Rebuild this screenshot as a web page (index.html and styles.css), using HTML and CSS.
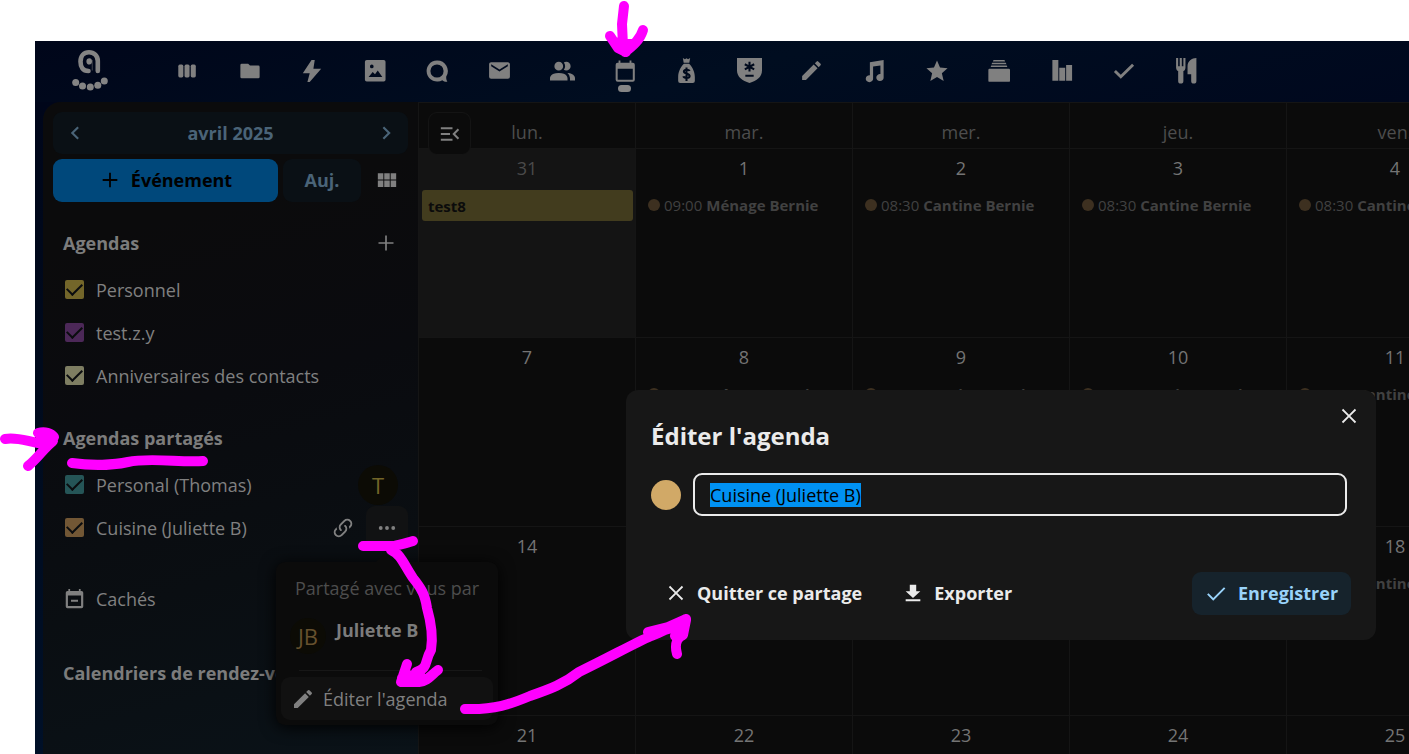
FILE: index.html
```html
<!DOCTYPE html>
<html lang="fr">
<head>
<meta charset="utf-8">
<title>Agenda</title>
<link rel="stylesheet" href="styles.css">
</head>
<body>
<div class="app">
  <header class="topbar">
    <a class="logo" href="#" aria-label="Accueil">
      <svg viewBox="0 0 36 44"><path d="M16.500 22C10.500 22 8.500 17.500 8.500 12.500 8.500 7 12 3.200 17 3.200S25.800 7 25.800 12V22" fill="none" stroke="currentColor" stroke-width="4.600" stroke-linecap="round" stroke-linejoin="round"/><path d="M17.500 9.300a3 3 0 1 0 0 6.200c1.500 0 2.500-1 2.500-3s-1-3.200-2.500-3.200z" fill="currentColor"/><path d="M20.300 11v10.500" stroke="currentColor" stroke-width="1.200" opacity=".4"/><g fill="currentColor"><circle cx="3.700" cy="33.500" r="3.500"/><circle cx="10.500" cy="37" r="3.500"/><circle cx="18.300" cy="38" r="3.500"/><circle cx="25.800" cy="36.300" r="3.500"/><circle cx="32.300" cy="32" r="3.500"/></g></svg>
    </a>
    <nav class="apps" aria-label="Applications">
      <a href="#" aria-label="Tableau de bord"><svg viewBox="0 0 24 24"><rect x="2.500" y="5" width="5.500" height="14" rx="1.700"/><rect x="9.300" y="5" width="5.500" height="14" rx="1.700"/><rect x="16.100" y="5" width="5.500" height="14" rx="1.700"/></svg></a>
      <a href="#" aria-label="Fichiers"><svg viewBox="0 0 24 24"><path d="M10 4H3A1.500 1.500 0 0 0 1.500 5.500v13A1.500 1.500 0 0 0 3 20h18a1.500 1.500 0 0 0 1.500-1.500v-11A1.500 1.500 0 0 0 21 6h-9z"/></svg></a>
      <a href="#" aria-label="Activité"><svg viewBox="0 0 24 24"><path d="M11.500 0H15l-1.500 9.500H22L9.500 24H7l2.500-9.500H2z"/></svg></a>
      <a href="#" aria-label="Photos"><svg viewBox="0 0 24 24"><path fill-rule="evenodd" d="M3 0h18.500a2 2 0 0 1 2 2v19.500a2 2 0 0 1-2 2H3a2 2 0 0 1-2-2V2a2 2 0 0 1 2-2zm2 18.500h15l-5-7-3 4-2.500-2.500zM8.500 5a2 2 0 1 0 0 4 2 2 0 0 0 0-4z"/></svg></a>
      <a href="#" aria-label="Discussion"><svg viewBox="0 0 24 24"><path fill-rule="evenodd" d="M12 .5a11.500 11.500 0 1 0 5.800 21.500c2 1.500 4 2 5.500 1.500-1-1.500-1.500-3.500-1.200-5.500A11.500 11.500 0 0 0 12 .5zm0 4.300a7.200 7.200 0 1 1 0 14.400 7.200 7.200 0 0 1 0-14.400z"/></svg></a>
      <a href="#" aria-label="Mail"><svg class="wide" viewBox="0 0 24 24"><path d="M20 8l-8 5-8-5V6l8 5 8-5m0-2H4c-1.100 0-2 .9-2 2v12a2 2 0 0 0 2 2h16a2 2 0 0 0 2-2V6c0-1.100-.9-2-2-2z"/></svg></a>
      <a href="#" aria-label="Contacts"><svg class="wide" viewBox="2 2 20 18"><path d="M16 17v2H2v-2s0-4 7-4 7 4 7 4M12.500 7.500A3.500 3.500 0 1 0 9 11a3.500 3.500 0 0 0 3.500-3.500M15.940 13A5.320 5.320 0 0 1 18 17v2h4v-2s0-3.630-6.060-4M15 4a3.390 3.390 0 0 0-1.930.59 5 5 0 0 1 0 5.820A3.390 3.390 0 0 0 15 11a3.500 3.500 0 0 0 0-7z"/></svg></a>
      <a class="current" href="#" aria-label="Agenda" aria-current="page"><svg viewBox="0 0 24 24"><path d="M20.500 21.500H4V9.500h16.500M17 .5V3H7V.5H5V3H4a2.200 2.200 0 0 0-2.200 2.200V21.500A2.200 2.200 0 0 0 4 23.700h16.500a2.200 2.200 0 0 0 2.200-2.200V5.200A2.200 2.200 0 0 0 20.500 3H19V.5"/></svg></a>
      <a href="#" aria-label="Budget"><svg class="wide" viewBox="0 0 24 24"><path d="M8.500 0l2 1.200L12 .2l1.500 1 2-1.200-.8 4.500H9.300zM9.500 5.500h5C17 7.500 20 13 20 18v4a2 2 0 0 1-2 2H6a2 2 0 0 1-2-2v-4c0-5 3-10.500 5.500-12.500z"/><path class="cut" d="M15 12.500c-.5-1.400-5.500-2-5.500.5 0 2.500 5.500 1.500 5.500 4.200 0 2.500-5.500 2.300-6 .3M12 9v13"/></svg></a>
      <a href="#" aria-label="Mots de passe"><svg class="wide" viewBox="0 0 24 24"><path d="M0 0h24v12c0 6-5 10-12 12C5 22 0 18 0 12z"/><path class="cut" d="M12 3.500v9.500M7.500 6l9 5M16.500 6l-9 5M8 17h8"/></svg></a>
      <a href="#" aria-label="Notes"><svg class="wide" viewBox="0 0 24 24"><path d="M20.700 7a1 1 0 0 0 0-1.400l-2.300-2.300a1 1 0 0 0-1.400 0l-1.800 1.800 3.700 3.700M3 17.200V21h3.700L17.800 9.900l-3.700-3.700z"/></svg></a>
      <a href="#" aria-label="Musique"><svg viewBox="0 0 24 24"><path d="M7.500 2.500L22.500 0v19a4 3.800 0 1 1-3.500-3.600V6L11 7.200v13a4 3.800 0 1 1-3.500-3.600z"/></svg></a>
      <a href="#" aria-label="Favoris"><svg viewBox="0 0 24 24"><path d="M12 .5l3.300 7.700 8.200.8-6.200 5.500 2 8.500-7.300-4.500L4.700 23l2-8.500L.5 9l8.200-.8z"/></svg></a>
      <a href="#" aria-label="Deck"><svg viewBox="0 0 24 24"><path d="M6 0h12l.6 1.500H5.400zM4.500 3h15l.6 1.500H3.900zM3.500 6h17l.6 1.500H2.900zM1.700 9.500h21a1.300 1.300 0 0 1 1.300 1.300v11.700a1.300 1.300 0 0 1-1.300 1.300h-21a1.300 1.300 0 0 1-1.300-1.300V10.800a1.300 1.300 0 0 1 1.300-1.300z"/></svg></a>
      <a href="#" aria-label="Sondages"><svg viewBox="0 0 24 24"><path d="M1.500 0h6.500v22.500H1.500zM9 8.500h6.500v14H9zM16.500 5.500H23v17h-6.500z"/></svg></a>
      <a href="#" aria-label="Tâches"><svg viewBox="0 0 24 24"><path d="M8.500 20.500L1 13l2.200-2.200 5.300 5.300L20.800 4 23 6.200z"/></svg></a>
      <a href="#" aria-label="Recettes"><svg class="wide" viewBox="0 0 24 24"><path d="M2 0h2v8h1.500V0h2v8H9V0h2v9c0 2-1 3-2 3.500V22a2 2 0 0 1-5 0v-9.500C3 12 2 11 2 9zM21.500 0v22a2.500 2.500 0 0 1-5 0v-6.500H13V8c0-5 4-8 8.500-8z"/></svg></a>
    </nav>
  </header>

  <div class="content">
    <aside class="sidebar">
      <div class="month">
        <button class="plain" aria-label="Mois précédent"><svg viewBox="0 0 24 24"><path d="M15.900 17.100L10.800 12l5.100-5.100L14.400 5.400 7.800 12l6.600 6.600z"/></svg></button>
        <button class="plain month-name">avril 2025</button>
        <button class="plain" aria-label="Mois suivant"><svg viewBox="0 0 24 24"><path d="M8.600 17.100l5.100-5.100-5.100-5.100 1.500-1.500 6.600 6.600-6.600 6.600z"/></svg></button>
      </div>
      <div class="actions">
        <button class="btn new-event"><svg viewBox="0 0 24 24"><path d="M20 13h-7v7h-2v-7H4v-2h7V4h2v7h7z"/></svg>Événement</button>
        <button class="btn today">Auj.</button>
        <button class="btn view" aria-label="Vue"><svg viewBox="0 0 24 24"><path d="M2 4.500h6v7H2zM9 4.500h6v7H9zM16 4.500h6v7h-6zM2 12.500h6v7H2zM9 12.500h6v7H9zM16 12.500h6v7h-6z"/></svg></button>
      </div>

      <div class="section-head"><h2>Agendas</h2><button class="plain add" aria-label="Ajouter un agenda"><svg viewBox="0 0 24 24"><path d="M21 13h-8v8h-2v-8H3v-2h8V3h2v8h8z"/></svg></button></div>
      <ul class="list">
        <li><label><input type="checkbox" class="c-yellow" checked>Personnel</label></li>
        <li><label><input type="checkbox" class="c-purple" checked>test.z.y</label></li>
        <li><label><input type="checkbox" class="c-cream" checked>Anniversaires des contacts</label></li>
      </ul>

      <div class="section-head"><h2>Agendas partagés</h2></div>
      <ul class="list">
        <li><label><input type="checkbox" class="c-teal" checked>Personal (Thomas)</label><span class="avatar">T</span></li>
        <li class="with-menu"><label><input type="checkbox" class="c-tan" checked>Cuisine (Juliette B)</label>
          <button class="plain link" aria-label="Copier le lien"><svg viewBox="0 0 24 24"><path d="M10.600 13.400c.4.400.4 1 0 1.400-.4.400-1 .4-1.400 0a5 5 0 0 1 0-7.100l3.500-3.500a5 5 0 0 1 7.100 7.100l-1.500 1.500c0-.8-.1-1.700-.4-2.400l.5-.5a3 3 0 0 0 0-4.300 3 3 0 0 0-4.300 0l-3.500 3.500a3 3 0 0 0 0 4.300m2.800-4.200c.4-.4 1-.4 1.400 0a5 5 0 0 1 0 7.100l-3.500 3.500a5 5 0 0 1-7.100-7.100l1.500-1.500c0 .8.100 1.700.4 2.400l-.5.500a3 3 0 0 0 0 4.300 3 3 0 0 0 4.300 0l3.500-3.500a3 3 0 0 0 0-4.300c-.4-.4-.4-1 0-1.400z"/></svg></button>
          <button class="plain more" aria-label="Actions"><svg viewBox="0 0 24 24"><circle cx="4.500" cy="12" r="2.300"/><circle cx="12" cy="12" r="2.300"/><circle cx="19.500" cy="12" r="2.300"/></svg></button>
          <div class="menu">
            <p class="menu-caption">Partagé avec vous par</p>
            <div class="owner"><span class="avatar small">JB</span><strong>Juliette B</strong></div>
            <hr>
            <button class="plain menu-item"><svg viewBox="0 0 24 24"><path d="M20.700 7a1 1 0 0 0 0-1.400l-2.300-2.300a1 1 0 0 0-1.400 0l-1.800 1.800 3.700 3.700M3 17.200V21h3.700L17.800 9.900l-3.700-3.700z"/></svg>Éditer l'agenda</button>
          </div>
        </li>
      </ul>
      <a class="hidden-cals" href="#"><svg viewBox="0 0 24 24"><path d="M19.500 20.500h-15V8.500h15M17 1v2.500H7V1H5v2.500H4A2 2 0 0 0 2 5.500v15.500a2 2 0 0 0 2 2h16a2 2 0 0 0 2-2V5.500a2 2 0 0 0-2-2h-1V1zM8 13.500h8v2.200H8z"/></svg>Cachés</a>
      <div class="section-head last"><h2>Calendriers de rendez-vous</h2></div>
    </aside>

    <main class="calendar">
      <button class="plain toggle" aria-label="Fermer la navigation"><svg viewBox="0 0 24 24"><path d="M1 4h14v2.400H1zM1 10.800h11v2.400H1zM1 17.600h14V20H1zM23 7.200L18.200 12l4.800 4.800-1.700 1.700-6.500-6.500 6.500-6.500z"/></svg></button>
      <table>
        <thead><tr><th>lun.</th><th>mar.</th><th>mer.</th><th>jeu.</th><th>ven.</th></tr></thead>
        <tbody>
          <tr>
            <td class="other"><div class="day">31</div><div class="block">test8</div></td>
            <td><div class="day">1</div><div class="event"><i></i>09:00 <b>Ménage Bernie</b></div></td>
            <td><div class="day">2</div><div class="event"><i></i>08:30 <b>Cantine Bernie</b></div></td>
            <td><div class="day">3</div><div class="event"><i></i>08:30 <b>Cantine Bernie</b></div></td>
            <td><div class="day">4</div><div class="event"><i></i>08:30 <b>Cantine Bernie</b></div></td>
          </tr>
          <tr>
            <td><div class="day">7</div></td>
            <td><div class="day">8</div><div class="event"><i></i>09:00 <b>Ménage Bernie</b></div></td>
            <td><div class="day">9</div><div class="event"><i></i>08:30 <b>Cantine Bernie</b></div></td>
            <td><div class="day">10</div><div class="event"><i></i>08:30 <b>Cantine Bernie</b></div></td>
            <td><div class="day">11</div><div class="event"><i></i>08:30 <b>Cantine Bernie</b></div></td>
          </tr>
          <tr>
            <td><div class="day">14</div></td>
            <td><div class="day">15</div></td>
            <td><div class="day">16</div></td>
            <td><div class="day">17</div></td>
            <td><div class="day">18</div><div class="event"><i></i>08:30 <b>Cantine Bernie</b></div></td>
          </tr>
          <tr>
            <td><div class="day">21</div></td>
            <td><div class="day">22</div></td>
            <td><div class="day">23</div></td>
            <td><div class="day">24</div></td>
            <td><div class="day">25</div></td>
          </tr>
        </tbody>
      </table>
    </main>
  </div>
</div>

<div class="dialog" role="dialog" aria-labelledby="dialog-title">
  <div class="dialog-head"><h1 id="dialog-title">Éditer l'agenda</h1><button class="plain close" aria-label="Fermer"><svg viewBox="0 0 24 24"><path d="M19.800 5.600l-1.400-1.400L12 10.600 5.600 4.200 4.200 5.600l6.400 6.400-6.400 6.400 1.400 1.400 6.400-6.400 6.400 6.400 1.400-1.400-6.400-6.400z"/></svg></button></div>
  <div class="field"><button class="swatch" aria-label="Couleur"></button><input id="name" type="text" aria-label="Nom de l'agenda" value="Cuisine (Juliette B)"></div>
  <div class="dialog-actions">
    <button class="plain leave"><svg viewBox="0 0 24 24"><path d="M19.800 5.600l-1.400-1.400L12 10.600 5.600 4.200 4.200 5.600l6.400 6.400-6.400 6.400 1.400 1.400 6.400-6.400 6.400 6.400 1.400-1.400-6.400-6.400z"/></svg>Quitter ce partage</button>
    <button class="plain export"><svg viewBox="0 0 24 24"><path d="M4 21h16v-2.200H4M20 10h-4.500V3h-7v7H4l8 7.500z"/></svg>Exporter</button>
    <button class="btn save"><svg viewBox="0 0 24 24"><path d="M9 20.400l-6.700-6.700 1.500-1.500L9 17.400 20.700 5.700l1.500 1.500z"/></svg>Enregistrer</button>
  </div>
</div>

<svg class="ink" viewBox="0 0 1409 754" aria-hidden="true">
  <path d="M624 6L622 24L623 46M610 36L618 48L626 52M643 30C640 40 633 46 625 52M614 42L625 44L632 44"/>
  <path d="M5 439C17 437 26 441 38 443M38 433C45 431 51 433 54 437M53 441C44 448 38 458 28 466M41 442L50 438"/>
  <path d="M72 463C92 466 114 465 128 462C150 457 182 463 203 461"/>
  <path d="M363 546H394C402 544 407 543 413 541M391 550C401 554 404 565 413 578C421 588 425 594 427 608C431 622 433 638 431 650C424 662 429 668 416 672M407 664L401 682H419C428 681 431 675 438 670M402 678L420 673"/>
  <path d="M465 709C495 710 511 704 530 696C550 689 564 684 579 672C610 657 633 644 651 636C664 631 675 625 686 619M648 632L668 627L686 619M686 620L683 635C678 637 674 643 677 654M658 632L682 625L675 636"/>
</svg>
<script src="app.js"></script>
</body>
</html>
```

FILE: styles.css
```css
* { box-sizing: border-box; }
body {
  margin: 0;
  min-height: 100vh;
  position: relative;
  overflow: hidden;
  background: #fff;
  color: #808080;
  font: 18px/24px "Open Sans", "Noto Sans", sans-serif;
}
button, input { font: inherit; color: inherit; }
svg { display: block; width: 24px; height: 24px; fill: currentColor; flex: none; }
h1, h2, p, ul { margin: 0; padding: 0; }
ul { list-style: none; }
a { color: inherit; text-decoration: none; }
.plain { padding: 0; border: 0; background: none; }

.app {
  height: 100vh;
  padding: 41px 0 0 35px;
  display: flex;
  flex-direction: column;
}
.topbar {
  flex: none;
  height: 61px;
  padding-bottom: 2px;
  display: flex;
  align-items: center;
  background: linear-gradient(165deg, #00061a, #000d20 50%, #00081e);
}
.logo { flex: none; width: 121px; padding-left: 37px; color: #848484; }
.logo svg { width: 36px; height: 44px; overflow: visible; }
.apps {
  flex: 0 1 1062px;
  display: grid;
  grid-template-columns: repeat(17, 1fr);
}
.apps a { position: relative; display: grid; place-items: center; height: 60px; }
.apps svg { width: 22px; height: 22px; overflow: visible; }
.apps .wide { width: 25px; height: 25px; }
.cut { fill: none; stroke: #000a1c; stroke-width: 2; }
.current::after {
  content: "";
  position: absolute;
  bottom: 9px;
  width: 13px;
  height: 7px;
  border-radius: 4px;
  background: #858585;
}

.content {
  flex: 1;
  min-height: 0;
  display: flex;
  padding-left: 8px;
  background: linear-gradient(#00061a, #000a1c 40%, #001028);
}
.sidebar {
  flex: none;
  width: 375px;
  padding: 10px 10px 0;
  border-radius: 18px 0 0 0;
  background: linear-gradient(165deg, #0b0b0c 20%, #0a0b0f 45%, #0a0e12 70%, #0a1218);
}
.month {
  height: 42px;
  padding: 0 10px;
  display: flex;
  align-items: center;
  border-radius: 9px;
  background: #0a1015;
  color: #4a6478;
}
.month-name { flex: 1; font-weight: 700; }
.actions { display: flex; gap: 5px; margin-top: 5px; }
.btn {
  height: 43px;
  padding: 0 0 2px;
  border: 0;
  border-radius: 9px;
  display: flex;
  align-items: center;
  justify-content: center;
  font-weight: 700;
}
.new-event { flex: 1; gap: 10px; background: #00487b; color: #000; }
.new-event svg { width: 22px; height: 22px; }
.today { width: 78px; background: #0a1015; color: #4a6478; }
.view { width: 42px; background: none; color: #808080; }
.view svg { width: 22px; height: 22px; }

.section-head {
  height: 44px;
  margin: 19px 12px 3px 10px;
  display: flex;
  align-items: center;
  justify-content: space-between;
}
h2 { font-size: 18px; line-height: 24px; font-weight: 700; white-space: nowrap; color: #7c7c7c; }
.add { width: 20px; }
.add svg { width: 20px; height: 20px; }
.list li { height: 43px; display: flex; align-items: center; }
.list label { flex: 1; display: flex; align-items: center; gap: 12px; padding-left: 12px; white-space: nowrap; }
.list input {
  appearance: none;
  margin: 0;
  width: 19px;
  height: 19px;
  border-radius: 2px;
  display: grid;
  place-items: center;
}
.list input:checked::after {
  content: "";
  width: 13px;
  height: 7px;
  margin-bottom: 4px;
  border: solid #0b0d0f;
  border-width: 0 0 2px 2px;
  transform: rotate(-45deg);
}
.c-yellow { background: #73662a; }
.c-purple { background: #4c2858; }
.c-cream { background: #7e7e62; }
.c-teal { background: #255557; }
.c-tan { background: #725735; }
.avatar {
  width: 40px;
  height: 40px;
  margin-right: 10px;
  display: grid;
  place-items: center;
  border-radius: 50%;
  background: #0c0b05;
  color: #736528;
  font-size: 22px;
}
.with-menu { position: relative; }
.link { width: 24px; margin-right: 11px; }
.more {
  width: 42px;
  height: 43px;
  display: grid;
  place-items: center;
  border-radius: 9px;
  background: #111213;
}
.more svg { width: 20px; height: 20px; }
.menu {
  position: absolute;
  z-index: 2;
  top: 56px;
  left: 223px;
  width: 222px;
  padding: 5px;
  border-radius: 9px;
  background: #0b0b0b;
  box-shadow: 0 2px 16px #000;
}
.menu::before {
  content: "";
  position: absolute;
  bottom: 100%;
  left: 100px;
  border: 9px solid transparent;
  border-top: 0;
  border-bottom-color: #0b0b0b;
}
.menu-caption { height: 44px; padding: 9px 14px; color: #4d4d4d; white-space: nowrap; }
.owner { display: flex; height: 56px; padding-left: 9px; gap: 10px; color: #7c7c7c; }
.owner strong { margin-top: 7px; }
.avatar.small { width: 36px; height: 36px; margin: 7px 0 0; color: #66512e; }
.menu hr { margin: 3px 11px 6px 18px; border: 0; border-top: 1px solid #171717; }
.menu-item {
  width: 100%;
  height: 43px;
  padding: 0 10px;
  display: flex;
  align-items: center;
  gap: 8px;
  border-radius: 9px;
  background: #111;
  white-space: nowrap;
}
.hidden-cals { margin: 28px 0 0 11px; height: 43px; display: flex; align-items: center; gap: 11px; }
.hidden-cals svg { width: 21px; height: 21px; }
.last { margin-top: 31px; }

.calendar { flex: 1; min-width: 0; overflow: hidden; position: relative; background: #0b0b0b; }
.toggle {
  position: absolute;
  z-index: 1;
  left: 10px;
  top: 10px;
  width: 43px;
  height: 43px;
  display: grid;
  place-items: center;
  border: 1px solid #141414;
  border-radius: 9px;
  background: #0b0b0b;
}
.toggle svg { width: 20px; height: 20px; }
table { table-layout: fixed; width: 100%; min-width: 1086px; border-collapse: collapse; }
th, td { border: 1px solid #151515; padding: 0; font-weight: 400; }
th { height: 46px; padding-top: 12px; color: #4d4d4d; }
td { height: 189px; vertical-align: top; }
.day { padding-top: 7px; text-align: center; color: #747474; }
.other { background: #141414; }
.other .day { color: #4a4a4a; }
.block {
  height: 31px;
  margin: 10px 2px 0 3px;
  padding: 0 6px;
  border-radius: 3px;
  background: #423c1e;
  color: #0b0b0b;
  font-size: 15px;
  font-weight: 700;
  line-height: 32px;
}
.event {
  display: flex;
  align-items: center;
  gap: 4px;
  margin: 13px 0 0 12px;
  overflow: hidden;
  white-space: nowrap;
  font-size: 15px;
  color: #414141;
}
.event i { flex: none; width: 12px; height: 12px; border-radius: 50%; background: #3d3020; }

.dialog {
  position: absolute;
  z-index: 3;
  top: 390px;
  right: 33px;
  width: 750px;
  padding: 4px 25px 25px;
  border-radius: 12px;
  background: #171717;
  color: #ebebeb;
}
.dialog-head { display: flex; justify-content: space-between; align-items: start; height: 79px; }
h1 { padding-top: 26px; font-size: 24px; line-height: 32px; font-weight: 700; }
.close { margin-top: 11px; margin-right: -9px; }
.close svg { width: 22px; height: 22px; }
.field { display: flex; align-items: center; gap: 12px; margin-right: 4px; }
.swatch { width: 30px; height: 30px; padding: 0; border: 0; border-radius: 50%; background: #d1a967; }
.field input {
  flex: 1;
  min-width: 0;
  height: 43px;
  padding: 0 15px;
  border: 2px solid #ebebeb;
  border-radius: 9px;
  outline: 0;
  background: #171717;
}
.field input::selection { background: #0091f2; color: #000; }
.dialog-actions { display: flex; align-items: center; margin-top: 56px; font-weight: 700; }
.dialog-actions .plain { display: flex; align-items: center; gap: 10px; padding-bottom: 2px; font-weight: 700; white-space: nowrap; }
.leave { margin-left: 14px; }
.export { margin-left: 40px; }
.dialog-actions svg { width: 22px; height: 22px; }
.save { width: 159px; gap: 11px; margin-left: auto; background: #16232c; color: #99d3fa; }

.ink {
  position: absolute;
  z-index: 4;
  top: 0;
  left: 0;
  width: 1409px;
  height: 754px;
  fill: none;
  stroke: #f0f;
  stroke-width: 10;
  stroke-linecap: round;
  stroke-linejoin: round;
  pointer-events: none;
}
```

FILE: app.js
```js
const nameField = document.getElementById("name");
nameField.focus();
nameField.select();
```
